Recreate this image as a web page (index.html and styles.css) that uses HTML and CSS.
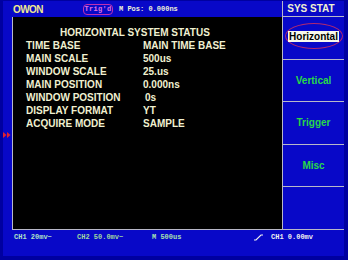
FILE: index.html
```html
<!DOCTYPE html>
<html lang="en">
<head>
    <meta charset="UTF-8">
    <meta name="viewport" content="width=device-width, initial-scale=1.0">
    <title>OWON - SYS STAT</title>
    <link rel="stylesheet" href="styles.css">
</head>
<body>
    <div class="scope">
        <div class="frame">
            <div class="main">
                <div class="left">
                    <div class="topbar">
                        <span class="brand">OWON</span>
                        <span class="trig">Trig'd</span>
                        <span class="pos">M Pos: 0.000ns</span>
                    </div>
                    <div class="screen">
                        <div class="status">
                            <div class="status-title">HORIZONTAL SYSTEM STATUS</div>
                            <div>TIME BASE</div><div>MAIN TIME BASE</div>
                            <div>MAIN SCALE</div><div>500us</div>
                            <div>WINDOW SCALE</div><div>25.us</div>
                            <div>MAIN POSITION</div><div>0.000ns</div>
                            <div>WINDOW POSITION</div><div class="indent">0s</div>
                            <div>DISPLAY FORMAT</div><div>YT</div>
                            <div>ACQUIRE MODE</div><div>SAMPLE</div>
                        </div>
                    </div>
                </div>
                <div class="menu">
                    <div class="menu-title">SYS STAT</div>
                    <div class="menu-item">
                        <span class="ring"><span class="chip">Horizontal</span></span>
                    </div>
                    <div class="menu-item">Vertical</div>
                    <div class="menu-item">Trigger</div>
                    <div class="menu-item">Misc</div>
                    <div class="menu-item"></div>
                </div>
            </div>
            <div class="statusbar">
                <span class="ch1">CH1 20mv~</span>
                <span class="ch2">CH2 50.0mv~</span>
                <span class="tb">M 500us</span>
                <svg class="edge" width="9" height="7" viewBox="0 0 9 7">
                    <polyline points="0,6 2,6 7,1 9,1" fill="none" stroke="#f0f0f0" stroke-width="1.2"/>
                </svg>
                <span class="level">CH1 0.00mv</span>
            </div>
        </div>
        <svg class="marker" width="8" height="6" viewBox="0 0 8 6">
            <polygon points="0,0 3.5,3 0,6" fill="#e02030"/>
            <polygon points="4,0 7.5,3 4,6" fill="#e02030"/>
        </svg>
    </div>
</body>
</html>
```

FILE: styles.css
```css
body {
    margin: 0;
    font-family: "Liberation Sans", Arial, sans-serif;
}
.scope {
    position: relative;
    width: 348px;
    height: 260px;
    box-sizing: border-box;
    padding: 1px 4px 4px 3px;
    background-color: #0000a0;
}
.frame {
    height: 100%;
    display: flex;
    flex-direction: column;
    background-color: #0808c8;
}
.main {
    display: flex;
    height: 228px;
}
.left {
    width: 279px;
    display: flex;
    flex-direction: column;
}
.topbar {
    height: 16px;
    display: flex;
    align-items: center;
    padding-left: 10px;
}
.brand {
    width: 70px;
    font-size: 10px;
    font-weight: bold;
    color: #f0e890;
    letter-spacing: -0.6px;
}
.trig {
    width: 28px;
    height: 9px;
    border: 1px solid #c030b0;
    border-radius: 4px;
    font-family: "Liberation Mono", monospace;
    font-size: 7px;
    line-height: 9px;
    font-weight: bold;
    text-align: center;
    color: #e070e0;
    letter-spacing: 0.3px;
}
.pos {
    margin-left: 6px;
    font-family: "Liberation Mono", monospace;
    font-size: 7px;
    font-weight: bold;
    color: #f0f0d8;
}
.screen {
    flex: 1;
    margin-left: 9px;
    border-left: 1px solid #b8b8c8;
    background-color: #000;
    padding: 9px 0 0 13px;
}
.status {
    display: grid;
    grid-template-columns: 117px auto;
    font-size: 10px;
    font-weight: bold;
    line-height: 13px;
    color: #f0f0d0;
}
.status-title {
    grid-column: 1 / 3;
    padding-left: 34px;
}
.indent {
    padding-left: 2px;
}
.menu {
    width: 61px;
    border-left: 1px solid #b8b8c8;
    display: flex;
    flex-direction: column;
}
.menu-title {
    height: 15px;
    line-height: 16px;
    border-bottom: 1px solid #b8b8c8;
    font-size: 10px;
    font-weight: bold;
    color: #f0f0d0;
    padding-left: 3px;
    text-align: center;
    padding-right: 8px;
}
.menu-item {
    flex: 1;
    display: flex;
    align-items: center;
    justify-content: center;
    border-bottom: 1px solid #b8b8c8;
    font-size: 10px;
    font-weight: bold;
    color: #28d848;
}
.menu-item:last-child {
    border-bottom: none;
}
.ring {
    width: 56px;
    height: 24px;
    border: 1px solid #b02870;
    border-radius: 50%;
    display: flex;
    align-items: center;
    justify-content: center;
    margin-bottom: 3px;
}
.chip {
    background-color: #f8f8ec;
    color: #000;
    line-height: 11px;
    padding: 0 1px;
}
.statusbar {
    flex: 1;
    margin-left: 9px;
    border-top: 1px solid #b8b8c8;
    display: grid;
    grid-template-columns: 63px 75px 102px 17px auto;
    align-items: start;
    padding: 3px 0 0 2px;
    font-family: "Liberation Mono", monospace;
    font-size: 7px;
    font-weight: bold;
    line-height: 8px;
}
.ch1 {
    color: #b0e0c8;
}
.ch2 {
    color: #a0d8a0;
}
.tb {
    color: #a8e0b0;
}
.edge {
    margin-top: 1px;
}
.level {
    color: #f0f0f0;
}
.marker {
    position: absolute;
    left: 3px;
    top: 132px;
}
```
